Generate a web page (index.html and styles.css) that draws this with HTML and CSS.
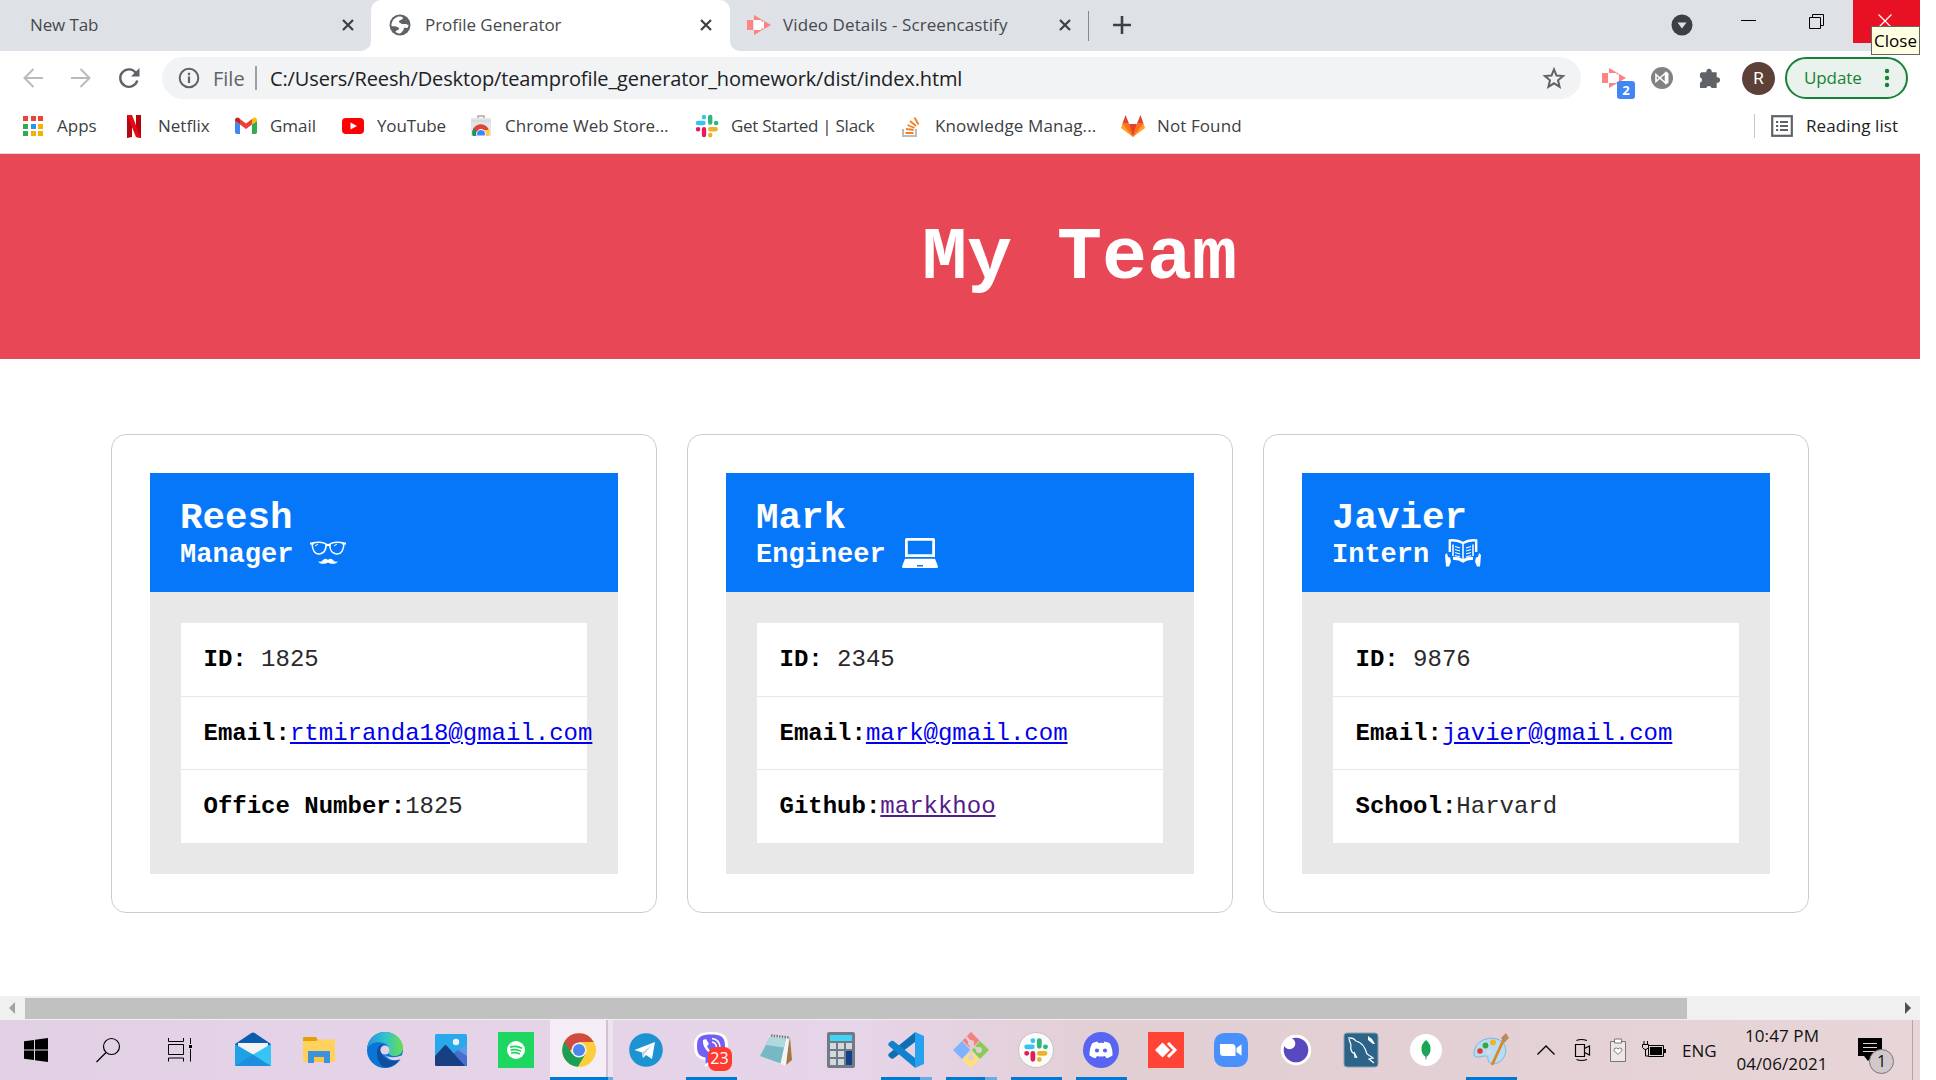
FILE: index.html
```html
<!DOCTYPE html>
<html lang="en">
<head>
<meta charset="utf-8">
<title>Profile Generator</title>
<link rel="stylesheet" href="styles.css">
</head>
<body>
<div class="screen">

  <div class="tabstrip">
    <div class="tab tab-first">
      <span class="t tab-title">New Tab</span>
      <svg class="tab-close" viewBox="0 0 12 12"><path d="M1 1l10 10M11 1L1 11"/></svg>
    </div>
    <div class="tab-well">
      <div class="tab tab-active">
        <svg class="favicon" viewBox="0 0 22 22"><circle cx="11" cy="11" r="10.5" fill="#5f6368"/><path d="M9 2.500c4-.5 6 1 4.500 2.500s-3.500 1-3.500 2.500 2 1.500 3 2.500h3c1.500 0 2.500.8 3.500.8 0 1-.3 2-.8 3-1.200.5-2.700-.5-3.700.2-.5 2.500-2 4.500-4 5.500-2.500.2-4-1-4.500-2 .5-1.500 3-1 3.500-2.500s-1.500-2-3-2.500-3.500 0-4.500-.5c-.3-2 .5-4.500 2-6.500C6 4 7.500 3 9 2.500z" fill="#fff"/></svg>
        <span class="t tab-title">Profile Generator</span>
        <svg class="tab-close" viewBox="0 0 12 12"><path d="M1 1l10 10M11 1L1 11"/></svg>
      </div>
    </div>
    <div class="tab tab-last">
      <svg class="favicon favicon-cast" viewBox="0 0 24 20"><path d="M0 5h6v10H0z" fill="#ff8585"/><path d="M7 0l17 10L7 20v-5h7l2-2V7l-2-2H7z" fill="#ff8080"/><path d="M7 5h7v3l3-2v8l-3-2v3H7z" fill="#fff"/></svg>
      <span class="t tab-title">Video Details - Screencastify</span>
      <svg class="tab-close" viewBox="0 0 12 12"><path d="M1 1l10 10M11 1L1 11"/></svg>
      <span class="tab-rule"></span>
      <svg class="tab-new" viewBox="0 0 18 18"><path d="M9 0v18M0 9h18"/></svg>
      <div class="window-buttons">
        <svg class="win-search" viewBox="0 0 22 22"><circle cx="11" cy="11" r="10.500" fill="#3c4043"/><path d="M6.500 8.500h9L11 14.500z" fill="#dee1e6"/></svg>
        <svg class="win-min" viewBox="0 0 15 1"><path d="M0 .5h15" stroke="#000"/></svg>
        <svg class="win-max" viewBox="0 0 15 15"><path d="M.5 3.500h11v11H.5zM3.500 3.500v-3h11v11h-3" fill="none" stroke="#000"/></svg>
        <div class="win-close">
          <svg viewBox="0 0 14 14"><path d="M.5.5l13 13M13.500.5L.5 13.500" stroke="#fff" stroke-width="1.200"/></svg>
          <span class="tooltip"><span class="t">Close</span></span>
        </div>
      </div>
    </div>
  </div>

  <div class="toolbar">
    <svg class="nav nav-back" viewBox="0 0 20 20"><path d="M20 10H2M10.500 1L1.500 10l9 9"/></svg>
    <svg class="nav nav-fwd" viewBox="0 0 20 20"><path d="M0 10h18M9.500 1l9 9-9 9"/></svg>
    <svg class="nav nav-reload" viewBox="0 0 20 20"><path d="M17 5A8.700 8.700 0 1 0 18.300 12.500" /><path d="M20.500 0v8.500H12z" class="nav-head"/></svg>
    <div class="omnibox">
      <svg class="info" viewBox="0 0 22 22"><circle cx="11" cy="11" r="9.300" fill="none" stroke="#5f6368" stroke-width="2"/><path d="M11 9.500v6.500M11 5.800v2.400" stroke="#5f6368" stroke-width="2.200"/></svg>
      <span class="t scheme">File</span>
      <span class="omni-rule"></span>
      <span class="t url">C:/Users/Reesh/Desktop/teamprofile_generator_homework/dist/index.html</span>
      <svg class="star" viewBox="0 0 24 24"><path d="M12 3.300l2.500 6.200 6.600.5-5.100 4.300 1.600 6.500L12 17.300l-5.600 3.500L8 14.300 2.900 10l6.600-.5z" fill="none" stroke="#5f6368" stroke-width="2"/></svg>
    </div>
    <div class="ext-cast">
      <svg viewBox="0 0 24 20"><path d="M0 5h6v10H0z" fill="#ff8585"/><path d="M7 0l17 10L7 20v-5h7l2-2V7l-2-2H7z" fill="#ff8080"/><path d="M7 5h7v3l3-2v8l-3-2v3H7z" fill="#fff"/></svg>
      <span class="ext-count">2</span>
    </div>
    <svg class="ext-vs" viewBox="0 0 22 22"><circle cx="11" cy="11" r="11" fill="#828282"/><path d="M5 7.500v7L14.500 6v10z" fill="none" stroke="#fff" stroke-width="1.600"/><path d="M14 4.500l3.500 1.500v10L14 17.500z" fill="#fff"/></svg>
    <svg class="ext-puzzle" viewBox="0 0 22 22"><path d="M2.500 4.500h5.200a2.900 2.900 0 1 1 5.600 0h5.200v5.300a2.900 2.900 0 1 1 0 5.600V21h-5.300a2.900 2.900 0 0 0-5.600 0H1v-5.600a2.900 2.900 0 0 0 0-5.600V6z" fill="#5f6368"/></svg>
    <span class="avatar">R</span>
    <div class="update">
      <span class="t">Update</span>
      <svg viewBox="0 0 6 20"><g fill="#188038"><circle cx="3" cy="3" r="2.200"/><circle cx="3" cy="10" r="2.200"/><circle cx="3" cy="17" r="2.200"/></g></svg>
    </div>
  </div>

  <div class="bookmarks">
    <div class="bm bm-apps"><svg viewBox="0 0 24 24"><g fill="#ea4335"><path d="M2 2h5v5H2zM10 2h5v5h-5zM17 2h5v5h-5z"/></g><path d="M2 10h5v5H2zM2 17h5v5H2z" fill="#34a853"/><path d="M10 10h5v5h-5z" fill="#2196f3"/><path d="M17 10h5v5h-5zM10 17h5v5h-5zM17 17h5v5h-5z" fill="#fbaf00"/></svg><span class="t">Apps</span></div>
    <div class="bm bm-netflix"><svg viewBox="0 0 24 24"><path d="M5 1h5v22l-5 1zM14 1h5v23l-5-1z" fill="#b1060f"/><path d="M5 1h5l9 23-5-1z" fill="#e50914"/></svg><span class="t">Netflix</span></div>
    <div class="bm bm-gmail"><svg viewBox="0 0 24 24"><path d="M1 7l5 3.500V20H3a2 2 0 0 1-2-2z" fill="#4285f4"/><path d="M18 10.500L23 7v11a2 2 0 0 1-2 2h-3z" fill="#34a853"/><path d="M6 10.500V5l6 4.500L18 5v5.500L12 15z" fill="#ea4335"/><path d="M1 7V6c0-2.500 3-3.500 4.500-1.500L6 5v5.500z" fill="#c5221f"/><path d="M18 5l.5-.5C20 2.500 23 3.500 23 6v1l-5 3.500z" fill="#fbbc04"/></svg><span class="t">Gmail</span></div>
    <div class="bm bm-youtube"><svg viewBox="0 0 24 24"><rect x="1" y="4" width="22" height="16" rx="4" fill="#f00"/><path d="M9.500 8.500l6.500 3.500-6.500 3.500z" fill="#fff"/></svg><span class="t">YouTube</span></div>
    <div class="bm bm-store"><svg viewBox="0 0 24 24"><path d="M2 4h20v18H2z" fill="#e3e4e6"/><path d="M9 4V2h6v2" fill="none" stroke="#aaa" stroke-width="1.600"/><path d="M2 7h20" stroke="#cfd0d2"/><path d="M4 22a8.500 8.500 0 0 1 1.500-9A8.500 8.500 0 0 1 20 17h-8z" fill="#db4437"/><path d="M4 22A8.500 8.500 0 0 1 5 14l5 8z" fill="#0f9d58"/><path d="M12 16h8.500c.5 2 .2 4-.5 6h-7z" fill="#ffcd40"/><path d="M8 22a4.500 4.500 0 1 1 8 0z" fill="#4285f4" stroke="#fff"/></svg><span class="t">Chrome Web Store...</span></div>
    <div class="bm bm-slack"><svg viewBox="0 0 24 24"><g stroke-width="4.400" stroke-linecap="round"><path d="M9 3v.2M3 9h5.500" stroke="#36c5f0"/><path d="M15.200 3v5.500M21 9h.2" stroke="#2eb67d"/><path d="M15.200 15.200h5.500M15.200 21v.2" stroke="#ecb22e"/><path d="M9 15.200V21M3 15.200h.2" stroke="#e01e5a"/></g></svg><span class="t">Get Started | Slack</span></div>
    <div class="bm bm-overflow"><svg viewBox="0 0 24 24"><path d="M4 15v7h13v-7" fill="none" stroke="#bcbbbb" stroke-width="2"/><path d="M6.500 19h8M7 15l7.600 1M8.500 11l7 3M11 7l6 5M15.500 3.500l4 7" stroke="#f48024" stroke-width="1.900"/></svg><span class="t">Knowledge Manag...</span></div>
    <div class="bm bm-gitlab"><svg viewBox="0 0 24 24"><path d="M12 23L4.500 10h15z" fill="#e24329"/><path d="M12 23L0 14l1.500-4.500H8z" fill="#fca326"/><path d="M12 23L24 14l-1.500-4.500H16z" fill="#fca326"/><path d="M12 23L1.500 9.500H8zM12 23L22.500 9.500H16z" fill="#fc6d26"/><path d="M1.500 9.500L4.500 1 8 9.500zM22.500 9.500L19.500 1 16 9.500z" fill="#e24329"/></svg><span class="t">Not Found</span></div>
    <div class="reading">
      <svg viewBox="0 0 22 22"><rect x="1.200" y="1.200" width="19.600" height="19.600" fill="none" stroke="#5f6368" stroke-width="2.200"/><path d="M5 7h2.200M5 11h2.200M5 15h2.200M9 7h8M9 11h8M9 15h8" stroke="#5f6368" stroke-width="2"/></svg>
      <span class="t">Reading list</span>
    </div>
  </div>

  <main class="page">
    <header class="hero"><h1>My Team</h1></header>
    <section class="team">
      <article class="card">
        <div class="card-head">
          <h2>Reesh</h2>
          <h3>Manager <svg class="role" viewBox="0 0 36 32"><g fill="none" stroke="#fff" stroke-width="1.500"><path d="M2 5.500C6 3.800 13 4 16 6c.5 5-1.500 9.500-6.500 10C4.500 16.500 2.500 12 2 5.500zM34 5.500C30 3.800 23 4 20 6c-.5 5 1.500 9.500 6.500 10C31.500 16.500 33.500 12 34 5.500z"/><path d="M15.500 7.500q2.500-1.200 5 0M0 5.500h4M32 5.500h4" stroke-width="2.200"/><path d="M5 8l3-2M24 8l3-2" stroke-width="1"/></g><path d="M18 22c2.500-2.500 4.500-.5 6 1 1 1 2.500 1 4 .2-1.500 3.200-7 3.300-10 1.300-3 2-8.500 1.900-10-1.300 1.500.8 3 .8 4-.2 1.500-1.500 3.500-3.500 6-1z" fill="#fff"/></svg></h3>
        </div>
        <div class="card-body">
          <ul>
            <li><b>ID:</b> 1825</li>
            <li><b>Email:</b><a class="link">rtmiranda18@gmail.com</a></li>
            <li><b>Office Number:</b>1825</li>
          </ul>
        </div>
      </article>
      <article class="card">
        <div class="card-head">
          <h2>Mark</h2>
          <h3>Engineer <svg class="role" viewBox="0 0 36 32"><path d="M4.500 0h27a1.500 1.500 0 0 1 1.500 1.500V19H3V1.500A1.500 1.500 0 0 1 4.500 0zM5.800 2.800v13.500h24.400V2.800zM3 20.800h30l3 7.700q0 1.500-1.500 1.500h-33Q0 30 0 28.500zM15 27v1.600h6V27z" fill="#fff" fill-rule="evenodd"/></svg></h3>
        </div>
        <div class="card-body">
          <ul>
            <li><b>ID:</b> 2345</li>
            <li><b>Email:</b><a class="link">mark@gmail.com</a></li>
            <li><b>Github:</b><a class="link link-seen">markkhoo</a></li>
          </ul>
        </div>
      </article>
      <article class="card">
        <div class="card-head">
          <h2>Javier</h2>
          <h3>Intern <svg class="role" viewBox="0 0 36 32"><g fill="none" stroke="#fff"><path d="M4.800 14V2.500Q12 1.500 18 5q6-3.500 13.200-2.500V14" stroke-width="2.400"/><path d="M8 18V6.500M28 18V6.500M18 5v17" stroke-width="1.500"/><path d="M8 20.500q6-.5 10 2.500 4-3 10-2.500" stroke-width="3.200"/><path d="M10 8.500l5 1.500M10 11.500l5 1.500M10 14.500l5 1.500M10 17.500l5 1.500M26 8.500L21 10M26 11.500L21 13M26 14.500L21 16M26 17.500L21 19" stroke-width="1.300"/></g><path d="M0 17l2-2 1 4 2 .5 1 4-2 5H1zM36 17l-2-2-1 4-2 .5-1 4 2 5h3z" fill="#fff"/></svg></h3>
        </div>
        <div class="card-body">
          <ul>
            <li><b>ID:</b> 9876</li>
            <li><b>Email:</b><a class="link">javier@gmail.com</a></li>
            <li><b>School:</b>Harvard</li>
          </ul>
        </div>
      </article>
    </section>
  </main>

  <div class="scrollbar">
    <svg class="arrow-left" viewBox="0 0 6 12"><path d="M6 0v12L0 6z" fill="#a3a3a3"/></svg>
    <span class="thumb"></span>
    <svg class="arrow-right" viewBox="0 0 6 12"><path d="M0 0v12l6-6z" fill="#505050"/></svg>
  </div>

  <div class="taskbar">
    <div class="sys"><svg viewBox="0 0 24 24"><path d="M0 3.300L10 2v9.500H0zM11 1.800L24 0v11.500H11zM0 12.500h10V22L0 20.700zM11 12.500h13V24l-13-1.800z"/></svg></div>
    <div class="sys"><svg viewBox="0 0 24 24"><circle cx="15.500" cy="8.500" r="8" fill="none" stroke="#000" stroke-width="1.200"/><path d="M10 14.500L.5 24" stroke="#000" stroke-width="1.200"/></svg></div>
    <div class="sys"><svg viewBox="0 0 24 24"><path d="M.5 0v3.500h15V0M.5 6.500h15v10h-15zM.5 23.500v-3.500h15v3.500M22.500 0v6M22.500 11v12.500" fill="none" stroke="#000"/><path d="M21 7h3v3h-3z"/></svg></div>

    <div class="app app-mail"><svg viewBox="0 0 36 36"><path d="M0 12L16 1.200q2-1.200 4 0L36 12v6H0z" fill="#0a5cad"/><path d="M3 11h30v8L18 24 3 19z" fill="#f5f3f5"/><path d="M0 12l18 10.500L36 34H1q-1 0-1-1z" fill="#1ea2e4"/><path d="M18 22.500L36 12v22z" fill="#36c5f4"/><path d="M0 34l18-11.500L36 34z" fill="#1c8fe0"/></svg></div>
    <div class="app app-files"><svg viewBox="0 0 36 36"><path d="M2 6q0-1 1-1h12l2 3v8H2z" fill="#e0a00b"/><path d="M2 9h13l2-1.500h16q1 0 1 1V30H3q-1 0-1-1z" fill="#ffd35b"/><path d="M7 31V19h22v12h-6v-6H13v6z" fill="#3b93dc"/><path d="M13 25h10v5H13z" fill="#fbc53b"/></svg></div>
    <div class="app app-edge"><svg viewBox="0 0 36 36"><defs><linearGradient id="eg" x1="0" x2="1"><stop offset="0" stop-color="#2493d8"/><stop offset=".5" stop-color="#30c3cf"/><stop offset="1" stop-color="#6be04a"/></linearGradient></defs><circle cx="18" cy="18" r="18" fill="#0c74d4"/><path d="M0 17C1 7 8 0 18 0c11 0 18 8 18 16 0 5-4 8-8 8-5 0-7-2-6-4 2-4-1-8-6-9C9 9 2 12 0 17z" fill="url(#eg)"/><path d="M10 20c0-4 2-7 6-8-3 3-3 8 0 12 4 5 11 6 17 3-5 7-12 9-17 8-4-3-6-9-6-15z" fill="#0f4fa0"/><path d="M34 27l2-7v16H24c4-1.500 7-4 10-9z" fill="#e3d2e5"/><circle cx="18" cy="18" r="4.600" fill="#e3d2e5"/><path d="M17 22q6 6 19 1l-2 4q-10 4-16-4z" fill="#e3d2e5"/></svg></div>
    <div class="app"><svg viewBox="0 0 36 36"><rect x="2" y="2" width="32" height="32" rx="1.500" fill="#2aa8ec"/><path d="M20 22l6-5 8 7v10H20z" fill="#4670d0"/><path d="M24 18l10 6V13z" fill="#7795e4" opacity=".6"/><path d="M2 24L11.500 13.500q1-1 2 0L32 34H3.500Q2 34 2 32.500z" fill="#173f82"/><circle cx="23" cy="10" r="3.200" fill="#f1f2f6"/></svg></div>
    <div class="app"><svg viewBox="0 0 36 36"><path d="M0 0h36v36H0z" fill="#1ed760"/><circle cx="18" cy="18" r="9" fill="#fff"/><path d="M12 15.200q6-2 12 1M12.500 18.200q5-1.500 10.500 1M13 21q4-1.200 9 1" fill="none" stroke="#1ed760" stroke-width="1.700"/></svg></div>
    <div class="app app-chrome"><svg viewBox="0 0 36 36"><circle cx="18" cy="18" r="16.800" fill="#fcc934"/><path d="M18 18H3.500l0-8.500A16.800 16.800 0 0 1 32.700 10H18z" fill="#d04a40"/><path d="M3.500 9.500A16.800 16.800 0 0 0 17 34.800L24.500 22 11 22z" fill="#1b9e57"/><path d="M18 10h14.700A16.800 16.800 0 0 1 17 34.800L25 22z" fill="#fdcd3b"/><circle cx="18" cy="18" r="7.600" fill="#f1f1f1"/><circle cx="18" cy="18" r="6" fill="#4a86ee"/></svg></div>
    <div class="app"><svg viewBox="0 0 36 36"><circle cx="18" cy="18" r="16.800" fill="#1d93d2"/><path d="M6.500 18L27 10l-3 17-6-4-3 3-1-5.500z" fill="#fff"/><path d="M14 20.500L24 13l-7 8.500-2 4.500z" fill="#bcd8ea"/></svg></div>
    <div class="app app-open app-viber"><svg viewBox="0 0 36 36"><path d="M17 0C29 0 34 3 34 14s-4 15-14 15.500L11 35v-7C3 26 0 23 0 14 0 3 6 0 17 0z" fill="#fff"/><path d="M17 2.500c10 0 14 2 14 11.500s-4 12.500-12 12.800L11.500 32v-6.500C5 24 3 21.500 3 14 3 4.500 7 2.500 17 2.500z" fill="#7360f2"/><path d="M9 8l3-1 3 5-2 2c1 3 3 5 6 6l2-2 4 3-2 4C16 23 8 16 9 8z" fill="#fff"/><path d="M18 6.500q8 1 8 9.500M18 10q4.500 1 4.500 5.500" fill="none" stroke="#fff" stroke-width="1.500"/></svg><span class="badge">23</span></div>
    <div class="app"><svg viewBox="0 0 36 36"><path d="M32 5l2 23-7 6z" fill="#a27a3e"/><path d="M13 4l18 2-3 28L3 24z" fill="#f1f5f6"/><path d="M12 5l16 1.500-5.500 25L2 24z" fill="#76b8c4"/><path d="M12 5l16 1.500-2 9L8 13z" fill="#b0d9dd"/><path d="M13 3.500l18 2" stroke="#777" stroke-width="2.500" stroke-dasharray="1.500 1.200"/></svg></div>
    <div class="app"><svg viewBox="0 0 36 36"><rect x="4" width="28" height="36" rx="2" fill="#727a83"/><path d="M7 3h22v6H7z" fill="#41d4f8"/><g fill="#d3d8df"><path d="M7 11h6v6H7zM15 11h6v6h-6zM23 11h6v6h-6zM7 19h6v6H7zM15 19h6v6h-6zM7 27h6v6H7zM15 27h6v6h-6z"/></g><path d="M23 19h6v14h-6z" fill="#12408c"/></svg></div>
    <div class="app app-open app-many"><svg viewBox="0 0 36 36"><path d="M2 25.500q-3-2-1-4L27 .2V10L5.500 26.500q-2 1-3.500-1z" fill="#0f6fb3"/><path d="M2 10q-3 2-1 4L27 35.800V26L5.500 9Q3.500 8 2 10z" fill="#1282cc"/><path d="M27 0l9 4v28l-9 4z" fill="#26a2ee"/></svg></div>
    <div class="app app-open app-many"><svg viewBox="0 0 36 36"><path d="M18 0l8.500 8.500L18 17 9.500 8.500z" fill="#f58080"/><path d="M9 9l8.500 9L9 27 0 18z" fill="#80b3ff"/><path d="M27 9l9 9-9 9-8.500-9z" fill="#87cc55"/><path d="M18 19l8.500 8.500L18 36l-8.500-8.500z" fill="#ffe173"/><path d="M13 5l5 6v16M18 13l8 5" fill="none" stroke="#e2cfd6" stroke-width="2.500"/><circle cx="18" cy="11" r="3" fill="#e2cfd6"/><circle cx="18" cy="26" r="3" fill="#e2cfd6"/><circle cx="26" cy="18" r="3" fill="#e2cfd6"/></svg></div>
    <div class="app app-open"><svg viewBox="0 0 36 36"><circle cx="18" cy="18" r="17.500" fill="#fbfbfb" stroke="#c9bfc3"/><g transform="translate(5.500 5.500) scale(1.040)" stroke-width="4.600" stroke-linecap="round"><path d="M9 3v.2M3 9h5.500" stroke="#36c5f0"/><path d="M15.200 3v5.500M21 9h.2" stroke="#2eb67d"/><path d="M15.200 15.200h5.500M15.200 21v.2" stroke="#ecb22e"/><path d="M9 15.200V21M3 15.200h.2" stroke="#e01e5a"/></g></svg></div>
    <div class="app app-open"><svg viewBox="0 0 36 36"><circle cx="18" cy="18" r="18" fill="#5865f2"/><path d="M14.500 9.500l.8 1.500q2.700-.5 5.400 0l.8-1.500q3 .4 5.300 1.800 3 5.500 2.700 12.200-3 2.300-6 2.800l-1.500-2.200q-4 1-8 0l-1.500 2.200q-3-.5-6-2.800-.3-6.700 2.700-12.200 2.300-1.400 5.300-1.800z" fill="#fff"/><circle cx="14" cy="18.500" r="2.100" fill="#5865f2"/><circle cx="22" cy="18.500" r="2.100" fill="#5865f2"/></svg></div>
    <div class="app"><svg viewBox="0 0 36 36"><path d="M0 0h36v36H0z" fill="#ff4436"/><path d="M14.500 10.500L22 18l-7.500 7.500L7 18z" fill="#fff"/><path d="M20 11l7 7-7 7" fill="none" stroke="#fff" stroke-width="3"/></svg></div>
    <div class="app"><svg viewBox="0 0 36 36"><rect x="1" y="1" width="34" height="34" rx="10" fill="#4a90fb"/><path d="M7 12h12q3.500 0 3.500 3.500V24h-12Q7 24 7 20.500zM23.500 16l5-3.800v11.600l-5-3.800z" fill="#fff"/></svg></div>
    <div class="app"><svg viewBox="0 0 36 36"><circle cx="18" cy="18" r="15.200" fill="#fff"/><circle cx="18" cy="18" r="12.300" fill="#5849be"/><circle cx="11.500" cy="11.500" r="5.800" fill="#fff"/></svg></div>
    <div class="app"><svg viewBox="0 0 36 36"><rect x="1" y="1" width="34" height="34" rx="3" fill="#2b6488" stroke="#8aa3b3"/><path d="M5 6q5-1 8 3 8 2 11 13l6 4-4 1 5 4M6 7l2 6q-1 5 2 8 2 0 2 5M11 20l3 6" fill="none" stroke="#fff" stroke-width="1.200"/><path d="M25 4l4 3 3 5-2 0-5-4z" fill="#fff"/></svg></div>
    <div class="app"><svg viewBox="0 0 36 36"><circle cx="18" cy="18" r="16" fill="#fff"/><path d="M18 8q5 4 4.500 10-.5 5-4.500 7-4-2-4.500-7Q13 12 18 8z" fill="#13aa52"/><path d="M18 16v11.500" stroke="#67817a"/></svg></div>
    <div class="app app-open"><svg viewBox="0 0 36 36"><path d="M1 23C0 10 14 4 24 7c8 2 11 11 7 18-3 6-10 8-14 6-4-3 0-7-5-7-4 0-9 3-11-1z" fill="#b5ddf5" stroke="#7db4da"/><circle cx="7" cy="19" r="2.800" fill="#e33c2d"/><circle cx="12.500" cy="13.500" r="2.900" fill="#3aa63f"/><circle cx="20" cy="10.500" r="3" fill="#f3b421"/><circle cx="16" cy="20.500" r="2.300" fill="#e5d5da"/><path d="M31 7L19 33" stroke="#de8526" stroke-width="2.800"/><path d="M28 6l5-5 3 5-5 5z" fill="#b98b58"/></svg></div>

    <div class="tray">
      <svg class="tray-up" viewBox="0 0 18 10"><path d="M.5 9.500L9 1l8.500 8.500" fill="none" stroke="#000" stroke-width="1.300"/></svg>
      <svg class="tray-cam" viewBox="0 0 18 24"><path d="M1.500 6.500h9v12h-9zM10.500 10.500l5-2.500v9l-5-2.500M2.500 2.500Q7 .5 13 2.500M2.500 21.500q4.500 2 10.500 0" fill="none" stroke="#000" stroke-width="1.200"/></svg>
      <svg class="tray-clip" viewBox="0 0 16 24"><path d="M.5 3.500h15v20H.5z" fill="#f0e6e7" stroke="#777"/><path d="M4.500 1h7v4h-7z" fill="#fff" stroke="#777"/><path d="M8 16.500l-4-4q0-3 2.500-2.500L8 11l1.500-1q2.500-.5 2.500 2.500z" fill="#fff" stroke="#777"/></svg>
      <svg class="tray-battery" viewBox="0 0 24 18"><path d="M6.500 4.500h15v11h-15z" fill="none" stroke="#000"/><path d="M8 6h12v8H8zM22 8h2v4h-2z"/><path d="M.5 3.500h6v3q-3 4-6 0zM2 0v3M5.500 0v3M3.500 8v7h3" fill="#e6d4d7" stroke="#000"/></svg>
      <span class="t lang">ENG</span>
      <div class="clock"><span class="t">10:47 PM</span><span class="t">04/06/2021</span></div>
      <div class="notes"><svg viewBox="0 0 24 24"><path d="M0 0h24v18h-9l-5 5-4-5H0z"/><path d="M5 5.500h14M5 9.500h14M5 13.500h14" stroke="#e6d4d7"/></svg><span class="notes-count">1</span></div>
      <span class="peek"></span>
    </div>
  </div>
</div>
</body>
</html>
```

FILE: styles.css
```css
* { box-sizing: border-box; }
body { margin: 0; background: #fff; font-family: "Open Sans", "Noto Sans", sans-serif; }
svg { display: block; flex: none; overflow: visible; }
.t { white-space: nowrap; }
.screen { width: 1920px; height: 1080px; display: flex; flex-direction: column; overflow: hidden; }

/* Tab strip */
.tabstrip { display: flex; height: 51px; flex: none; font-size: 17px; color: #45494d; background: #fff; }
.tab { display: flex; align-items: center; height: 51px; background: #dee1e6; }
.tab-title { padding-bottom: 2px; letter-spacing: -0.12px; }
.tab-first { width: 371px; padding: 0 17px 0 30px; border-bottom-right-radius: 10px; justify-content: space-between; }
.tab-well { width: 359px; background: #dee1e6; }
.tab-active { padding: 0 18px; background: #fff; border-radius: 10px 10px 0 0; }
.tab-active .tab-title { flex: 1; margin-left: 14px; letter-spacing: -0.04px; }
.tab-last { flex: 1; padding-left: 17px; border-bottom-left-radius: 10px; }
.tab-last .tab-title { width: 270px; margin-left: 12px; letter-spacing: 0.1px; }
.tab-close { width: 12px; height: 12px; margin-bottom: 1px; stroke: #3c4043; stroke-width: 2.2; }
.tab-last .tab-close { margin-left: 6px; }
.favicon { width: 22px; height: 22px; margin-bottom: 1px; }
.favicon-cast { width: 24px; height: 20px; }
.tab-rule { width: 1px; height: 30px; margin-left: 17px; background: #85888c; }
.tab-new { width: 18px; height: 18px; margin: 0 0 1px 24px; stroke: #3c4043; stroke-width: 2.6; }
.window-buttons { display: flex; align-items: flex-start; align-self: flex-start; margin-left: auto; }
.win-search { width: 22px; height: 22px; margin: 14px 48px 0 0; }
.win-min { width: 15px; height: 1px; margin: 20px 53px 0 0; }
.win-max { width: 15px; height: 15px; margin: 14px 29px 0 0; }
.win-close { position: relative; width: 67px; height: 43px; padding: 14px 0 0 25px; background: #e81123; }
.win-close svg { width: 14px; height: 14px; }
.tooltip { position: absolute; z-index: 2; left: 18px; top: 26px; width: 49px; height: 29px; display: flex; align-items: center; justify-content: center; background: #ffffe1; border: 1px solid #646464; color: #000; font-size: 17px; }

/* Toolbar */
.toolbar { display: flex; align-items: center; height: 54px; flex: none; padding-left: 23px; }
.nav { width: 20px; height: 20px; fill: none; stroke: #bababc; stroke-width: 2; }
.nav-fwd, .nav-reload { margin-left: 28px; }
.nav-reload { stroke: #5f6368; stroke-width: 2.4; }
.nav-head { fill: #5f6368; stroke: none; }
.omnibox { display: flex; align-items: center; width: 1419px; height: 42px; margin-left: 23px; padding: 0 15px 0 16px; border-radius: 21px; background: #f1f3f4; font-size: 20px; color: #202124; }
.info { width: 22px; height: 22px; }
.scheme { width: 42px; margin-left: 13px; color: #5f6368; }
.url { letter-spacing: -0.12px; }
.omni-rule { width: 2px; height: 24px; background: #9aa0a6; margin-right: 13px; }
.star { width: 24px; height: 24px; margin-left: auto; }
.ext-cast { position: relative; width: 24px; margin-left: 21px; }
.ext-cast svg { width: 24px; height: 20px; }
.ext-count { position: absolute; left: 15px; top: 13px; width: 18px; height: 18px; border-radius: 3px; background: #4285f4; color: #fff; font: bold 13px/18px "Open Sans", sans-serif; text-align: center; }
.ext-vs { width: 22px; height: 22px; margin-left: 25px; }
.ext-puzzle { width: 21px; height: 21px; margin-left: 26px; margin-right: 1px; }
.avatar { width: 33px; height: 33px; margin-left: 21px; border-radius: 50%; background: #5d4037; color: #fff; font: 17px/33px Roboto, sans-serif; text-align: center; }
.update { display: flex; align-items: center; justify-content: space-between; width: 123px; height: 42px; margin-left: 10px; padding: 0 16px 0 17px; border: 2px solid #188038; border-radius: 21px; background: #e9f2ec; color: #188038; font-size: 17px; letter-spacing: -0.1px; }
.update .t { padding-bottom: 2px; }
.update svg { width: 6px; height: 20px; }

/* Bookmarks */
.bookmarks { display: flex; align-items: center; height: 49px; flex: none; padding: 0 22px 6px 21px; border-bottom: 1px solid #dadce0; font-size: 17px; color: #3c4043; }
.bm { display: flex; align-items: center; gap: 12px; }
.bm .t, .reading .t { padding-bottom: 2px; }
.bm svg { width: 24px; height: 24px; }
.bm-apps { width: 101px; }
.bm-netflix { width: 112px; }
.bm-gmail { width: 107px; }
.bm-youtube { width: 128px; letter-spacing: -0.15px; }
.bm-store { width: 226px; }
.bm-slack { width: 204px; letter-spacing: -0.27px; }
.bm-overflow { width: 222px; letter-spacing: 0.14px; }
.bm-gitlab { letter-spacing: 0.1px; }
.reading { display: flex; align-items: center; width: 144px; height: 24px; margin-left: auto; padding-left: 16px; gap: 13px; border-left: 1px solid #c6c8cb; color: #202124; letter-spacing: 0.1px; }
.reading svg { width: 22px; height: 22px; }

/* Page */
.page { flex: 1; font-family: "Liberation Mono", "Courier New", monospace; color: #000; }
.hero { height: 205px; padding-left: 922px; background: #e84855; color: #fff; }
.hero h1 { margin: 0; font-size: 75px; line-height: 209px; }
.team { display: flex; gap: 30px; padding: 75px 111px 0; }
.card { width: 546px; height: 479px; padding: 38px; border: 1px solid #ccc; border-radius: 15px; }
.card-head { height: 119px; padding: 24px 30px 0; background: #0677f9; color: #fff; }
.card-head h2 { margin: 0; font-size: 37.5px; line-height: 42px; }
.card-head h3 { display: flex; margin: 0; font-size: 27px; line-height: 32px; white-space: pre; }
.role { width: 36px; height: 32px; margin-top: -1px; }
.card-body { height: 282px; padding: 31px; background: #e8e8e8; }
.card ul { display: grid; grid-template-rows: 73px 73px 74px; margin: 0; padding: 0; list-style: none; background: #fff; }
.card li { min-height: 0; padding-left: 22.5px; font-size: 24px; line-height: 73px; white-space: nowrap; color: #2a2a2a; }
.card li b { color: #000; }
.card li + li { border-top: 1px solid #e8e8e8; }
.card .link { color: #00e; text-decoration: underline; text-decoration-thickness: 2px; text-underline-offset: 2px; }
.card .link-seen { color: #551a8b; }

/* Scrollbar */
.scrollbar { display: flex; align-items: center; height: 24px; flex: none; padding: 0 9px; background: #f0f0f0; }
.scrollbar svg { width: 6px; height: 12px; }
.thumb { width: 1662px; height: 21px; margin-left: 10px; background: #c1c1c1; }
.arrow-right { margin-left: auto; }

/* Taskbar */
.taskbar { display: flex; height: 60px; flex: none; background: linear-gradient(90deg, #e1d0e3 0, #e4d2e6 15%, #e6d4e8 45%, #e2cfd4 58%, #e3d0d5 75%, #e7d5d7 100%); }
.sys { display: flex; align-items: center; justify-content: center; width: 72px; height: 60px; }
.sys svg { width: 24px; height: 24px; }
.app { position: relative; display: flex; align-items: center; justify-content: center; width: 65px; height: 60px; }
.app svg { width: 36px; height: 36px; }
.app-mail { margin-left: 7.5px; padding-right: 6px; }
.app-files { padding-right: 4px; }
.app-edge { padding-right: 2px; }
.app-open::after { content: ""; position: absolute; left: 7px; bottom: 0; width: 51px; height: 3px; background: #0078d7; }
.app-many::after { background: linear-gradient(90deg, #0078d7 39px, #68ace6 39px); }
.app-chrome { padding-right: 5px; background: linear-gradient(90deg, #0078d7 58px, #68ace6 58px) 1.5px 57px / 63px 3px no-repeat, linear-gradient(90deg, #f4edf5 56px, #d3c0d3 56px 58px, #eee2ef 58px) 1.5px 0 / 63px 60px no-repeat; }
.app-viber svg { margin-left: 2px; }
.badge { position: absolute; left: 29px; top: 27px; width: 24px; height: 24px; border-radius: 8px; background: #ff3b30; color: #fff; font-size: 16px; line-height: 22px; text-align: center; }
.tray { display: flex; align-items: center; flex: 1; padding-left: 13.5px; font-size: 17px; color: #111; }
.tray-up { width: 18px; height: 10px; }
.tray-cam { width: 18px; height: 24px; margin-left: 19px; }
.tray-clip { width: 16px; height: 24px; margin-left: 18px; }
.tray-battery { width: 24px; height: 18px; margin-left: 16px; }
.lang { width: 53px; margin-left: 16px; }
.clock { display: flex; flex-direction: column; align-items: center; width: 94px; line-height: 28px; letter-spacing: 0.1px; }
.notes { position: relative; width: 24px; margin-left: 29px; }
.notes svg { width: 24px; height: 24px; }
.notes-count { position: absolute; left: 11px; top: 11px; width: 25px; height: 25px; border: 1px solid #7d7678; border-radius: 50%; background: #d0c8ca; font-size: 16px; line-height: 22px; text-align: center; }
.peek { width: 1px; height: 60px; margin-left: auto; margin-right: 7px; background: #b3a6a9; }
```
